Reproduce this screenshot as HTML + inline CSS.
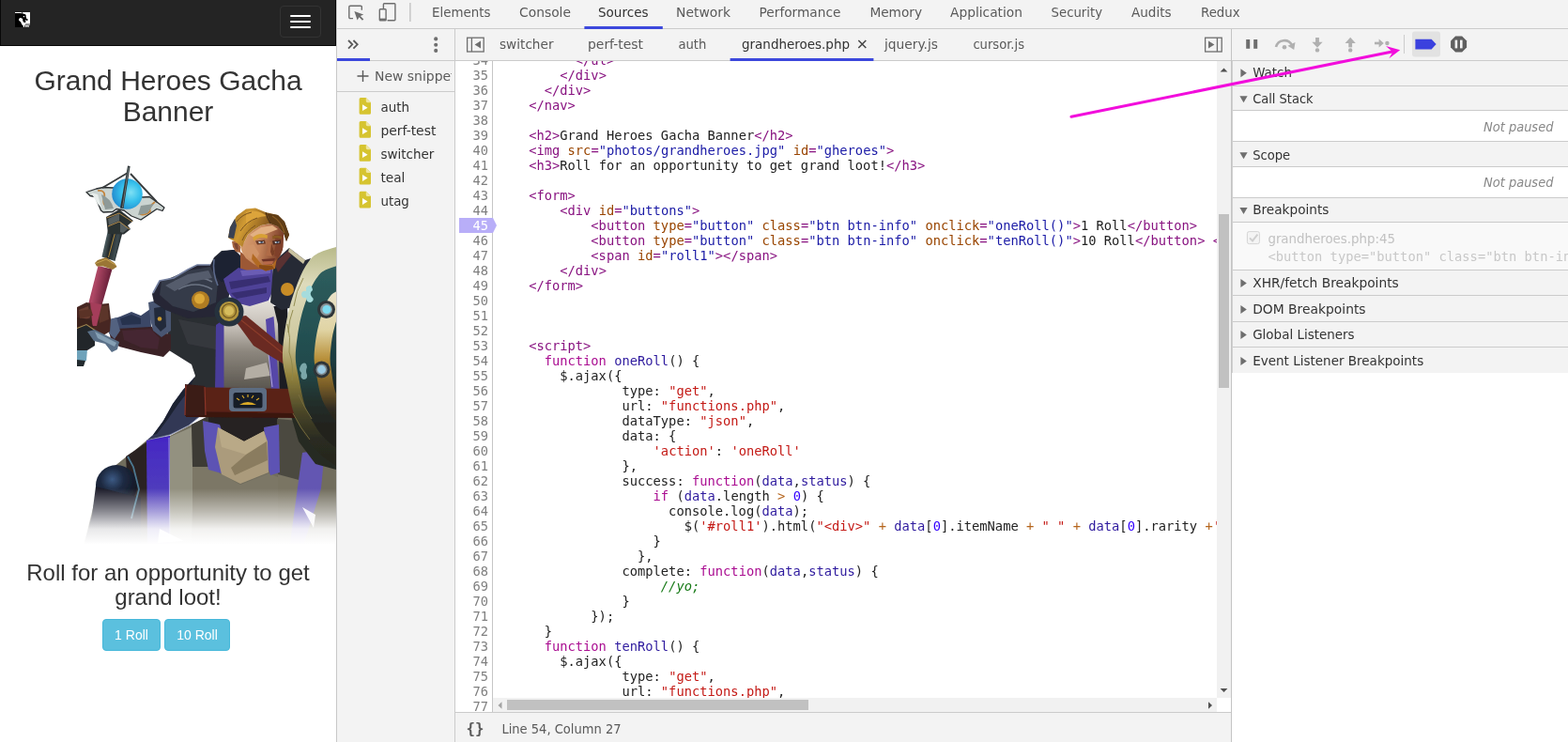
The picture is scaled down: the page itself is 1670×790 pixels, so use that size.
<!DOCTYPE html>
<html lang="en">
<head>
<meta charset="utf-8">
<title>Grand Heroes Gacha Banner - DevTools Sources</title>
<style>
html,body{margin:0;padding:0}
body{width:1670px;height:790px;position:relative;overflow:hidden;background:#fff}
#page,#code,#gut{will-change:transform}
#page{position:absolute;left:0;top:0;width:358px;height:790px;overflow:hidden;background:#fff;font-family:"Liberation Sans",Arial,sans-serif;color:#333}
#nav{position:absolute;left:0;top:0;width:356px;height:47.5px;background:#242424;border:1px solid #080808;border-top:0}
#tog{position:absolute;left:297px;top:6px;width:42px;height:32px;border:1px solid #333;border-radius:4px}
#tog i{position:absolute;left:10px;width:22px;height:2px;background:#fff;border-radius:1px}
#page h2{position:absolute;left:0;top:69px;width:358px;margin:0;font-size:30px;line-height:33px;font-weight:normal;text-align:center}
#page h3{position:absolute;left:0;top:597px;width:358px;margin:0;font-size:24px;line-height:26.4px;font-weight:normal;text-align:center}
.btn{position:absolute;top:659px;height:32px;border:1px solid #46b8da;background:#5bc0de;color:#fff;border-radius:4px;font-size:14px;line-height:32px;text-align:center}
#fig{position:absolute;left:0;top:160px;width:358px;height:430px}
#code{position:absolute;left:525px;top:65px;width:771px;height:678px;overflow:hidden;background:#fff;font-family:'DejaVu Sans Mono','Liberation Mono',monospace;font-size:13.75px;color:#222}
#code .ln{position:absolute;left:5px;height:16px;line-height:16px;white-space:pre;margin-top:-65px}
#gut{position:absolute;left:485px;top:65px;width:39px;height:693px;overflow:hidden;background:#fff;border-right:1px solid #c6c6c6;font-family:'DejaVu Sans Mono','Liberation Mono',monospace;font-size:13.75px;color:#808080}
#gut .gn{position:absolute;right:4px;height:16px;line-height:16px;margin-top:-65px}
#gut .bp{position:absolute;left:4px;width:36px;height:16px;background:#b8aef8;margin-top:-65px}
.t{color:#881280}.an{color:#994500}.av{color:#1a1aa6}.k{color:#aa0d91}.s{color:#c41a16}.d{color:#2e1a9e}.n{color:#3200ff}.o{color:#b5651d}.c{color:#177a17;font-style:italic}
</style>
</head>
<body>
<div id="page">
  <div id="nav">
    <svg style="position:absolute;left:15px;top:13px" width="16" height="16" viewBox="0 0 16 16"><rect width="16" height="16" fill="#fff"/><path d="M0 1 L5.500 1 L6 .8 L7.200 1.800 L7.300 0 L8 0 L8.200 1.500 L10.500 2 L12 3.200 L11.200 4 L12 5 L11.800 6.500 L13.500 7.200 L13.600 8.800 L12.200 9 L11.500 8 L11 9 L11.600 10.200 L11 11 L9.200 10.800 L8.600 9.800 L8.200 8.800 L8.200 7.200 L7 6.200 L5.200 6 L4.300 7 L4 8.400 L5 9.400 L6 10.200 L6.600 11.400 L7 12.400 L7.600 13.400 L8.600 14.200 L9 16 L0 16 Z" fill="#000"/><rect x="8.800" y="4" width="1.300" height="1.200" fill="#fff"/><path d="M11 12.600 H16 V13.500 H10.600 Z M10 14.200 h1.200 v1.800 h-1.200z M12.400 14.400 h1 v1.600 h-1z M14.600 14 h1.400 v2 h-1.400z" fill="#222"/></svg>
    <div id="tog"><i style="top:9px"></i><i style="top:15px"></i><i style="top:21px"></i></div>
  </div>
  <h2>Grand Heroes Gacha Banner</h2>
  <div id="fig"><svg width="358" height="430" viewBox="0 160 358 430" style="display:block">
<defs>
<clipPath id="imgclip"><rect x="82" y="160" width="276" height="430"/></clipPath>
<filter id="b1" x="-5%" y="-5%" width="110%" height="110%"><feGaussianBlur stdDeviation="0.7"/></filter>
<filter id="b2" x="-10%" y="-10%" width="120%" height="120%"><feGaussianBlur stdDeviation="2"/></filter>
<radialGradient id="orb" cx="0.62" cy="0.45" r="0.7"><stop offset="0" stop-color="#7fe0f4"/><stop offset="0.45" stop-color="#35c0ec"/><stop offset="1" stop-color="#1f7fc8"/></radialGradient>
<linearGradient id="fade" x1="0" y1="0" x2="0" y2="1"><stop offset="0" stop-color="#fff" stop-opacity="0"/><stop offset="0.42" stop-color="#fff" stop-opacity="0.5"/><stop offset="0.72" stop-color="#fff" stop-opacity="0.9"/><stop offset="1" stop-color="#fff" stop-opacity="1"/></linearGradient>
<linearGradient id="grip" x1="0" y1="0" x2="1" y2="0.35"><stop offset="0" stop-color="#7a2240"/><stop offset="0.4" stop-color="#b04866"/><stop offset="1" stop-color="#5a1830"/></linearGradient>
<linearGradient id="shaft" x1="0" y1="0" x2="1" y2="0.3"><stop offset="0" stop-color="#1a1e20"/><stop offset="0.3" stop-color="#46565a"/><stop offset="0.5" stop-color="#22282a"/><stop offset="0.78" stop-color="#3e4c50"/><stop offset="1" stop-color="#121618"/></linearGradient>
<linearGradient id="skin" x1="0" y1="0" x2="1" y2="0.2"><stop offset="0" stop-color="#d9a273"/><stop offset="0.55" stop-color="#c4835a"/><stop offset="1" stop-color="#7a3e28"/></linearGradient>
<linearGradient id="hair" x1="0" y1="0" x2="1" y2="0.3"><stop offset="0" stop-color="#8e6524"/><stop offset="0.35" stop-color="#d09a32"/><stop offset="0.7" stop-color="#8a5c20"/><stop offset="1" stop-color="#4a2e14"/></linearGradient>
<linearGradient id="tab" x1="0" y1="0" x2="0" y2="1"><stop offset="0" stop-color="#e4e0da"/><stop offset="0.3" stop-color="#c2bcb4"/><stop offset="0.55" stop-color="#8d877e"/><stop offset="1" stop-color="#55514a"/></linearGradient>
<linearGradient id="low" x1="0" y1="0" x2="1" y2="0"><stop offset="0" stop-color="#9c9886"/><stop offset="0.5" stop-color="#6c6858"/><stop offset="1" stop-color="#5a564a"/></linearGradient>
<linearGradient id="rim" x1="0" y1="0" x2="0" y2="1"><stop offset="0" stop-color="#b4b684"/><stop offset="0.18" stop-color="#dedbbc"/><stop offset="0.42" stop-color="#cfc9a0"/><stop offset="0.58" stop-color="#94843e"/><stop offset="0.74" stop-color="#4a4628"/><stop offset="0.86" stop-color="#2a2b20"/><stop offset="1" stop-color="#24251e"/></linearGradient>
<linearGradient id="teal" x1="0" y1="0" x2="0" y2="1"><stop offset="0" stop-color="#2f5e5e"/><stop offset="0.55" stop-color="#1f4a4c"/><stop offset="0.72" stop-color="#22302c"/><stop offset="0.85" stop-color="#20231e"/><stop offset="1" stop-color="#20221e"/></linearGradient>
<linearGradient id="teal2" x1="0" y1="0" x2="0" y2="1"><stop offset="0" stop-color="#284e50"/><stop offset="0.5" stop-color="#1c3c40"/><stop offset="0.8" stop-color="#1c221e"/><stop offset="1" stop-color="#1c1e1a"/></linearGradient>
<linearGradient id="inner" x1="0" y1="0" x2="0" y2="1"><stop offset="0" stop-color="#eae4cf"/><stop offset="0.3" stop-color="#e0d4a4"/><stop offset="0.5" stop-color="#b8903a"/><stop offset="0.68" stop-color="#7a5e28"/><stop offset="0.85" stop-color="#2e2a20"/><stop offset="1" stop-color="#22221c"/></linearGradient>
<radialGradient id="knee" cx="0.4" cy="0.35" r="0.7"><stop offset="0" stop-color="#3c5a84"/><stop offset="0.4" stop-color="#1e2a42"/><stop offset="1" stop-color="#10141e"/></radialGradient>
<linearGradient id="pstripe" x1="0" y1="0" x2="0" y2="1"><stop offset="0" stop-color="#4426c4"/><stop offset="1" stop-color="#5c54b4"/></linearGradient>
</defs>
<g clip-path="url(#imgclip)">
<g filter="url(#b1)">
<!-- cape behind (left) -->
<path d="M207 402 L195 415 L184 430 L174 448 L163 463 L156 469 L181 463 L201 453 L212 444 L216 412 Z" fill="#333955"/>
<path d="M207 402 L195 415 L184 430 L174 448 L163 463 L167 462 L179 446 L190 430 L201 416 L211 405 Z" fill="#1d2132"/>
<path d="M156 469 L181 463 L201 453 L212 444" stroke="#8a94b4" stroke-width="0.900" fill="none"/>
<!-- lower body mass -->
<path d="M156 469 L181 464 L204 452 L222 443 L310 440 L358 470 L358 585 L88 585 L98 545 L104 520 L120 498 L136 485 L143 480 Z" fill="#716d5d"/>
<path d="M181 465 L204 455 L206 500 L204 585 L181 585 Z" fill="#939180"/>
<path d="M204 452 L222 443 L224 470 L222 497 L205 497 Z" fill="#3c3a34"/>
<path d="M222 443 L296 443 L296 458 L280 460 L260 470 L234 456 L222 458 Z" fill="#262420"/>
<path d="M295 446 L318 448 L334 486 L320 516 L296 510 Z" fill="#4c4a40"/>
<path d="M296 505 L322 512 L316 585 L296 585 Z" fill="#7a7564"/>
<path d="M222 497 L236 505 L256 516 L286 504 L296 508 L296 585 L205 585 L205 497 Z" fill="#7b7766"/>
<!-- dark brown piece + knee -->
<path d="M134 486 L143 480 L157 470 L158 585 L140 585 Z" fill="#2a2022"/>
<circle cx="124" cy="517" r="22" fill="url(#knee)"/>
<path d="M102 518 L98 548 L90 578 L150 578 L150 530 Z" fill="#1a1e2a"/>
<path d="M136 486 L142 497 L148 521 L143 540 L140 552" fill="none" stroke="#4c7890" stroke-width="1.800"/>
<!-- purple vertical stripe -->
<path d="M156 469 L181 464 L181 585 L157 585 Z" fill="url(#pstripe)"/>
<path d="M180 466 L181 585" stroke="#b8b4e0" stroke-width="0.800" fill="none"/>
<!-- centre flap -->
<path d="M216 448 L234 452 L240 470 L236 504 L222 500 L218 480 Z" fill="#5d53b4"/>
<path d="M281 455 L297 452 L298 503 L288 506 L283 490 Z" fill="#5d53b4"/>
<path d="M232 455 L260 470 L281 459 L285 470 L286 503 L256 515 L236 505 L229 476 Z" fill="#ab9b7c"/>
<path d="M232 455 L260 470 L281 459 L284 470 L262 484 L236 476 Z" fill="#b9a987"/>
<path d="M262 484 L284 470 L285 490 L250 506 L246 498 Z" fill="#8a7c5e"/>
<!-- right low purple -->
<path d="M322 482 L346 478 L342 520 L322 585 L308 585 Z" fill="#6457b2"/>
<!-- shield bottom dark -->
<path d="M308 436 L358 430 L358 500 L336 494 L318 470 Z" fill="#282a22"/>
<!-- torso: chainmail -->
<path d="M176 326 L240 326 L232 373 L232 418 L200 418 L208 400 L204 388 L180 373 Z" fill="#2b2d32"/>
<path d="M190 340 L232 348 L230 372 L200 366 Z" fill="#36383e"/>
<path d="M288 326 L306 326 L310 418 L294 418 Z" fill="#1c1e24"/>
<!-- tabard -->
<path d="M234 342 L262 322 L290 320 L296 345 L298 418 L229 418 L232 373 Z" fill="url(#tab)"/>
<path d="M262 392 L284 386 L288 400 L260 404 Z" fill="#b4aea4"/>
<path d="M230 346 L238.500 340 L238.500 418 L229 418 Z" fill="#4a3c9a"/>
<path d="M283 340 L291.500 337 L297.500 416 L289 417 Z" fill="#5646a8"/>
<path d="M286 377 L290 412" stroke="#c8c2e8" stroke-width="0.8"/>
<!-- strap -->
<path d="M248 338 L262 336 L308 374 L306 390 L270 368 Z" fill="#6b2a20"/>
<path d="M252 337 L306 380" stroke="#8a3c2c" stroke-width="1.2" fill="none"/>
<!-- belt -->
<path d="M198 412 L312 414 L316 444 L198 442 Z" fill="#5a2418"/>
<path d="M198 438 L316 440 L316 445 L198 444 Z" fill="#3a150f"/>
<path d="M197 409 L218 411 L219 442 L197 443 Z" fill="#3a1a18"/>
<path d="M198 410 L197 442 M218 412 L219 442" stroke="#8a3428" stroke-width="1.2" fill="none"/>
<rect x="244" y="413" width="40" height="25" rx="4" fill="#5c6c82"/>
<rect x="248.500" y="418" width="31" height="16.500" rx="2.500" fill="#181b26"/>
<path d="M255 431 Q264 425 273 431 Z" fill="#d8a828"/>
<path d="M252 424 l3 2 M258 421 l2 3 M264 420 l0 3 M270 421 l-2 3 M276 424 l-3 2" stroke="#d8a828" stroke-width="1.2"/>
<!-- arm sleeve -->
<path d="M116 352 L123 346 L160 346 L166 353 L182 356 L182 372 L174 380 L150 375 L127 369 L118 361 Z" fill="#3a2026"/>
<path d="M130 352 L160 350 L170 360 L168 372 L150 370 L132 362 Z" fill="#442830"/>
<path d="M116 341 L128 337 L140 332 L150 336 L160 329 L161 348 L124 350 L116 353 Z" fill="#3a4666"/>
<path d="M128 339 L140 335 L150 339 L150 345 L130 346 Z" fill="#26304e"/>
<path d="M116 340 L124 338 L128 352 L122 361 L116 355 Z" fill="#526280"/>
<path d="M158 322 L170 319 L182 328 L182 352 L172 359 L163 352 L160 340 Z" fill="#485672"/>
<path d="M164 328 L176 326 L177 348 L171 353 L165 346 Z" fill="#242a3a"/>
<circle cx="170" cy="339.500" r="2.300" fill="#c89a30"/>
<!-- staff lower (below hand) -->
<path d="M82 371 L93 372 L92 384 L82 385 Z" fill="#6ea2ba"/>
<path d="M82 383 L91 384 L89 390 L82 390 Z" fill="#222a2e"/>
<!-- staff -->
<path d="M104.500 283 L119.500 286.500 L107 330 L93 328 Z" fill="url(#grip)"/>
<path d="M115.500 243 L131 245.500 L122.500 278 L108.500 273.500 Z" fill="url(#shaft)"/>
<path d="M123 246 L115.500 274" stroke="#b08a3c" stroke-width="1"/>
<path d="M101 280 L104 277 L113 274 L122 280 L124.500 284 L120 287 L110 283.500 L103 283.500 Z" fill="#9a7634"/>
<path d="M102 280.500 L113 276 L123 282" stroke="#c8a452" stroke-width="1" fill="none"/>
<!-- collar of staff head -->
<path d="M113 231 L127 223 L142 235 L136 240 L139 244 L132 249.500 L115 249 L114 240 Z" fill="#2c3032"/>
<path d="M115 233 L127 227.500 L127 235 L116 240 Z M128 236 L137 243 L131 248 L128 247 Z" fill="#565e60"/>
<path d="M113.500 232 L127 227 L141 236 M115 241 L127 236 L138 244" stroke="#b08a48" stroke-width="1" fill="none"/>
<!-- plate -->
<path d="M92 204.500 L102.500 201 L110 199.500 L121 200 L136 207 L152 210 L159 209.500 L167 215 L175 221 L173 224.500 L167 222.500 L156 230 L150 234 L140 230 L132 224 L124 222.500 L120 225.500 L110 226 L107.500 224 L101.500 209.500 L96 208.500 Z" fill="#cbd4d1" stroke="#2a2e30" stroke-width="1.300" stroke-linejoin="round"/>
<path d="M104 203 Q113 202 111 211 Q108 219 117 221 M165 215 Q158 220 160 225 Q154 230 149 228" stroke="#c4843a" stroke-width="1.700" fill="none"/>
<path d="M108 207 Q118 211 121 222 L112 223 Z" fill="#8e9a98"/>
<path d="M150 219 L164 217 L157 227 L147 229 Z" fill="#8e9a98"/>
<path d="M97 205 L104 207 L108 221 L104 217 Z" fill="#e8eeec"/>
<!-- frame lines -->
<path d="M109 200 L136 184 M139 185 L167 215" stroke="#383c3e" stroke-width="1.900" fill="none"/>
<!-- orb -->
<circle cx="135.500" cy="206.500" r="16.300" fill="url(#orb)"/>
<!-- spike -->
<path d="M136 176.500 L138.600 177 L131.500 222 L128 221.500 Z" fill="#2c3234"/>
<path d="M137 178 L130.500 221" stroke="#8a9698" stroke-width="0.700"/>
<!-- fist -->
<path d="M82 327 L92 322 L104 324 L116 323 L118 340 L117 353 L110 357 L100 352 L82 353 Z" fill="#472822"/>
<path d="M84 330 L94 326 L96 338 L86 343 Z" fill="#6a3e30"/>
<path d="M104 326 L115 325 L116 340 L106 344 Z" fill="#5c3429"/>
<path d="M96 322 L108.500 324 L103 347 L98.500 347 Z" fill="#a43c5a"/>
<path d="M82 338 L96 340 L100 350 L82 352 Z" fill="#3a201c"/>
<path d="M84 331 L97 329 L99 336 L85 339 Z" fill="#5a3228"/>
<path d="M82 350 L92 346 L101 352 L101 368 L93 373 L82 373 Z" fill="#22262a"/>
<path d="M82 349.500 L92 345.500 L101 351.500" stroke="#a08850" stroke-width="1.100" fill="none"/>
<path d="M93 353 L101 351 L127 364 L125 372 L119 375 L112 366 L100 363 Z" fill="#5a7088"/>
<path d="M101 353 L124 365 L122 369 L104 360 Z" fill="#86a0b4"/>
<!-- pauldron left -->
<path d="M162 313 L170 299 L185 296 L200 287 L210 282 L224 282 L228 274 L236 267 L250 266 L256 272 L256 290 L246 302 L242 326 L230 337 L200 339 L176 330 L164 322 Z" fill="#252834"/>
<path d="M172 300 L200 288 L224 284 L232 300 L230 322 L206 332 L184 326 L170 314 Z" fill="#353a48"/>
<path d="M186 300 Q206 290 226 300 M190 308 Q208 298 226 308" stroke="#6c7484" stroke-width="1.600" fill="none"/>
<path d="M226 279 L236 268 L248 266 L255 272 L256 288 L250 298 L236 300 L228 292 Z" fill="#1a2032"/>
<path d="M228 276 Q226 290 232 304" stroke="#5c6a8c" stroke-width="1.600" fill="none"/>
<path d="M163 312 L170 299 L185 296 L200 287 L210 282 L224 282" stroke="#7480a0" stroke-width="1.600" fill="none"/>
<path d="M176 304 L200 292 L222 288 L226 296 L204 300 L186 310 Z" fill="#555c6c"/>
<circle cx="213.500" cy="319.500" r="9.500" fill="#b07c24"/>
<circle cx="212.500" cy="318" r="5.500" fill="#dca838"/>
<!-- neck -->
<path d="M256 268 L272 280 L284 288 L276 296 L256 292 Z" fill="#9c5836"/>
<!-- scarf -->
<path d="M238 297 L254 285 L270 290 L290 284 L292 306 L286 320 L266 326 L250 322 L242 310 Z" fill="#4f4398"/>
<path d="M244 300 L286 294 L288 300 L246 308 Z M246 312 L284 306 L284 312 L252 318 Z" fill="#372d72"/>
<path d="M256 288 L288 286 L288 291 L258 294 Z" fill="#6a5cb4"/>
<!-- emblem -->
<circle cx="244" cy="332" r="15.500" fill="#27323e"/>
<circle cx="244" cy="331.500" r="10.500" fill="#b3963e"/>
<circle cx="244" cy="331" r="5" fill="#d6bc5c"/>
<circle cx="244" cy="331" r="7.500" fill="none" stroke="#6a5420" stroke-width="1.200"/>
<!-- pauldron right -->
<path d="M290 296 L291 279 L308 264 L325 277 L331 275 L325 288 L318 300 L316 326 L300 330 L288 322 Z" fill="#272a36"/>
<path d="M292 280 L307 267 L310 272 L296 290 Z" fill="#5a3030"/>
<path d="M308 264 L325 277 L323 281 L307 268 Z" fill="#c9c2a0"/>
<circle cx="306" cy="308" r="7" fill="#c88c26"/>
<!-- face -->
<path d="M260 258 L264 250 L270 245 L278 240 L288 238 L296 241 L302 248 L301.500 263 L299 271 L294 279 L287 284 L278 285 L270 281 L262 275 L258 269 L256 263 Z" fill="url(#skin)"/>
<path d="M266 250 L278 242 L290 240 L296 244 L286 248 L272 254 Z" fill="#e2b083"/>
<path d="M247 257 L252 256 L256 262 L256 269 L251 268 L248 263 Z" fill="#a4633f"/>
<path d="M249 259 L253 259 L254 266 L251 265 Z" fill="#7c4630"/>
<path d="M292 250 L302 250 L301 266 L297 275 L291 271 L294 260 Z" fill="#7f4029"/>
<path d="M262 262 L270 260 L276 270 L272 278 L264 274 Z" fill="#d09468"/>
<path d="M269 253 Q276 246.500 285 250.500 L284.500 254 Q276 251 270.500 256.500 Z" fill="#d7a036"/>
<path d="M290 251.500 Q295 249.500 300 252 L299.500 254.500 Q295 252.500 290.500 254.500 Z" fill="#8a5a22"/>
<path d="M272 256.500 L282 255.500 L283 259.500 L274 260.500 Z" fill="#6a3a28"/>
<path d="M290 256.500 L299 255.500 L299 259.500 L291 260.500 Z" fill="#4e2a20"/>
<path d="M275 257.200 l6 -0.300 l-0.600 1.800 l-4.600 0.200z M292.500 257.200 l5 -0.300 l-0.300 1.800 l-4.200 0.200z" fill="#c9d3dc"/>
<path d="M277.500 257 l2.200 0 l0 1.800 l-2.200 0z M294.500 257 l2 0 l0 1.800 l-2 0z" fill="#2c3a52"/>
<path d="M284 256 L289 258 L293 270 L290 273 L283 272 L285 266 Z" fill="#b06c46"/>
<path d="M289 259 L293 270 L290 273 L288 268 Z" fill="#7a3f28"/>
<path d="M278.500 276 L293 275 L292 277.500 L280 278.500 Z" fill="#6e3226"/>
<path d="M280 279 L291 278 L290 281 L282 281.500 Z" fill="#b8684a"/>
<path d="M269 270 L275 277 L279 282 L290 282 L294.500 276 L293 286 L283 288.500 L274 284 L268 276 Z" fill="#b26a24"/>
<path d="M276 282 L290 283 L292 286 L283 288.500 L276 285 Z" fill="#8a4c18"/>
<!-- hair -->
<path d="M243 253 L245 242 L252 230 L262 222.500 L272 221.500 L283 226 L296 229 L303 236 L308 250 L305 257 L302 248 L296 241 L288 238 L278 240 L270 245 L264 250 L260 258 L258 263 L250 257 L246 255 Z" fill="url(#hair)"/>
<path d="M243 253 L245 242 L250 233 L252 240 L249 254 Z" fill="#3a4252"/>
<path d="M262 226 Q274 222 284 230 Q272 230 262 240 Z" fill="#dca43a"/>
<path d="M284 227 L296 229 L303 236 L308 250 L305 257 L302 248 L296 241 L288 238 Z" fill="#5e3c18"/>
<path d="M290 230 Q300 236 303 248" stroke="#8a5c22" stroke-width="1.400" fill="none"/>
<path d="M252 236 Q258 228 268 226 M256 246 Q262 236 274 232 M258 256 Q262 246 272 240" stroke="#7a5420" stroke-width="1" fill="none"/>
<path d="M283 226 Q284 232 288 238" stroke="#4a2e12" stroke-width="1.200" fill="none"/>
<!-- shield -->
<path d="M372.0 259.0 C369.7 259.7 363.3 261.3 358.0 263.0 C352.7 264.7 344.7 266.7 340.0 269.0 C335.3 271.3 333.3 272.8 330.0 277.0 C326.7 281.2 323.5 286.0 320.0 294.0 C316.5 302.0 311.8 314.8 309.0 325.0 C306.2 335.2 304.3 345.7 303.0 355.0 C301.7 364.3 300.7 372.7 301.0 381.0 C301.3 389.3 303.0 395.2 305.0 405.0 C307.0 414.8 309.8 430.5 313.0 440.0 C316.2 449.5 319.8 455.2 324.0 462.0 C328.2 468.8 332.3 475.3 338.0 481.0 C343.7 486.7 352.3 492.7 358.0 496.0 C363.7 499.3 369.7 500.2 372.0 501.0 L460 501.0 L460 259.0 Z" fill="url(#rim)"/>
<path d="M373.4 278.8 C371.5 279.3 366.2 280.7 361.9 282.1 C357.5 283.5 350.9 285.2 347.0 287.2 C343.1 289.2 341.5 290.4 338.8 294.0 C336.0 297.5 333.4 301.6 330.5 308.3 C327.6 315.1 323.8 325.9 321.4 334.5 C319.1 343.1 317.6 352.0 316.5 359.9 C315.4 367.8 314.6 374.8 314.8 381.8 C315.1 388.9 316.5 393.8 318.1 402.1 C319.8 410.4 322.1 423.7 324.7 431.7 C327.3 439.7 330.4 444.5 333.8 450.3 C337.2 456.1 340.7 461.6 345.4 466.3 C350.0 471.1 357.2 476.2 361.9 479.0 C366.5 481.8 371.5 482.5 373.4 483.2 L460 483.2 L460 278.8 Z" fill="url(#teal)"/>
<path d="M375.4 304.6 C374.1 305.0 370.4 306.1 367.4 307.1 C364.3 308.2 359.7 309.5 357.0 311.0 C354.3 312.5 353.2 313.4 351.2 316.1 C349.3 318.7 347.5 321.8 345.5 327.0 C343.5 332.1 340.8 340.3 339.2 346.8 C337.5 353.3 336.5 360.0 335.7 366.0 C335.0 372.0 334.4 377.3 334.6 382.6 C334.8 388.0 335.7 391.7 336.9 398.0 C338.0 404.3 339.7 414.3 341.5 420.4 C343.3 426.5 345.4 430.1 347.8 434.5 C350.2 438.9 352.6 443.0 355.9 446.6 C359.1 450.3 364.1 454.1 367.4 456.2 C370.6 458.4 374.1 458.9 375.4 459.4 L460 459.4 L460 304.6 Z" fill="url(#inner)"/>
<path d="M377.1 323.7 C376.3 324.0 374.0 324.9 372.1 325.7 C370.2 326.5 367.3 327.5 365.6 328.6 C363.9 329.8 363.2 330.5 362.0 332.5 C360.8 334.6 359.7 336.9 358.4 340.9 C357.1 344.8 355.5 351.1 354.4 356.1 C353.4 361.0 352.8 366.2 352.3 370.8 C351.8 375.3 351.4 379.4 351.6 383.5 C351.7 387.6 352.3 390.4 353.0 395.2 C353.7 400.1 354.7 407.7 355.9 412.4 C357.0 417.1 358.3 419.8 359.8 423.2 C361.3 426.5 362.8 429.7 364.9 432.5 C366.9 435.3 370.0 438.2 372.1 439.8 C374.1 441.5 376.3 441.9 377.1 442.3 L460 442.3 L460 323.7 Z" fill="url(#teal2)"/>
<path d="M306 345 q4 14 2 30 q5 14 3 30 M323 296 q-8 14 -10 30 M312 330 q-4 10 -5 24" stroke="#8c8648" stroke-width="0.900" fill="none"/>
<path d="M318 420 q6 14 14 26 M312 440 q8 16 18 28" stroke="#7a7040" stroke-width="0.900" fill="none"/>
<circle cx="347.500" cy="329.500" r="9.500" fill="#2e3438"/>
<circle cx="347.500" cy="329.500" r="6.500" fill="#8a9498"/>
<circle cx="348" cy="329.500" r="4.600" fill="#7fdcf0"/>
<circle cx="342.500" cy="393.500" r="9" fill="#2e3438"/>
<circle cx="342.500" cy="393.500" r="6" fill="#7e888c"/>
<circle cx="342.500" cy="393.500" r="4.400" fill="#9ccce4"/>
<path d="M326 306 q6 -5 7 3 q-4 3 -1 7 q4 3 -1 6 q-5 0 -5 -5 q-5 1 -5 -4 q1 -4 5 -3 Z" fill="#a6dcdc"/>
<path d="M321 388 q5 -4 6 3 q-2 4 0 8 q1 5 -4 5 q-4 -2 -2 -7 q-4 -3 0 -9 Z" fill="#7aa6a8"/>
</g>
<!-- fade at bottom -->
<rect x="82" y="520" width="276" height="60" fill="url(#fade)"/>
<rect x="82" y="579.5" width="276" height="12" fill="#fff"/>
<path d="M322 540 L336 548 L334 562 Z M170 563 L196 576 L168 578 Z" fill="#fff" opacity="0.9"/>
</g>
</svg>
</div>
  <h3>Roll for an opportunity to get grand loot!</h3>
  <div class="btn" style="left:109px;width:60px">1 Roll</div>
  <div class="btn" style="left:175px;width:68px">10 Roll</div>
</div>
<svg width="1670" height="790" viewBox="0 0 1670 790" style="position:absolute;left:0;top:0" font-family="'DejaVu Sans','Liberation Sans',sans-serif">
<rect x="359" y="0" width="1311" height="30" fill="#f3f3f3"/>
<rect x="359" y="30" width="1311" height="1" fill="#cbcbcb"/>
<rect x="359" y="31" width="1311" height="33" fill="#f3f3f3"/>
<rect x="359" y="64" width="1311" height="1" fill="#cbcbcb"/>
<rect x="358" y="0" width="1" height="790" fill="#c8c8c8"/>
<rect x="359" y="65" width="125" height="725" fill="#f3f3f3"/>
<rect x="484" y="31" width="1" height="759" fill="#cbcbcb"/>
<rect x="359" y="97" width="125" height="1" fill="#cbcbcb"/>
<rect x="359" y="62" width="35" height="3" fill="#3c48dc"/>
<rect x="485" y="759" width="826" height="31" fill="#f3f3f3"/>
<rect x="485" y="758" width="826" height="1" fill="#cbcbcb"/>
<rect x="1311" y="31" width="1" height="759" fill="#c4c4c4"/>
<rect x="1296" y="65" width="15" height="678" fill="#f1f1f1"/>
<rect x="1298" y="228" width="11" height="185" fill="#c1c1c1"/>
<path d="M1299.6 76.5 L1303.5 72.5 L1307.4 76.5 Z" fill="#505050"/>
<path d="M1299.6 733 L1303.5 737 L1307.4 733 Z" fill="#505050"/>
<rect x="525" y="743" width="771" height="15" fill="#f1f1f1"/>
<rect x="540" y="745" width="321" height="11" fill="#c1c1c1"/>
<path d="M534.5 747.2 L530.5 751 L534.5 754.8 Z" fill="#a3a3a3"/>
<path d="M1287 747.2 L1291 751 L1287 754.8 Z" fill="#505050"/>
<text x="460.0" y="18.0" font-size="13.50" fill="#5a5a5a" textLength="62.4" lengthAdjust="spacingAndGlyphs">Elements</text>
<text x="553.0" y="18.0" font-size="13.50" fill="#5a5a5a" textLength="55.0" lengthAdjust="spacingAndGlyphs">Console</text>
<text x="637.0" y="18.0" font-size="13.50" fill="#333" textLength="53.5" lengthAdjust="spacingAndGlyphs">Sources</text>
<text x="720.0" y="18.0" font-size="13.50" fill="#5a5a5a" textLength="58.0" lengthAdjust="spacingAndGlyphs">Network</text>
<text x="808.6" y="18.0" font-size="13.50" fill="#5a5a5a" textLength="86.8" lengthAdjust="spacingAndGlyphs">Performance</text>
<text x="926.4" y="18.0" font-size="13.50" fill="#5a5a5a" textLength="55.6" lengthAdjust="spacingAndGlyphs">Memory</text>
<text x="1012.0" y="18.0" font-size="13.50" fill="#5a5a5a" textLength="77.0" lengthAdjust="spacingAndGlyphs">Application</text>
<text x="1119.6" y="18.0" font-size="13.50" fill="#5a5a5a" textLength="54.4" lengthAdjust="spacingAndGlyphs">Security</text>
<text x="1205.0" y="18.0" font-size="13.50" fill="#5a5a5a" textLength="42.6" lengthAdjust="spacingAndGlyphs">Audits</text>
<text x="1279.0" y="18.0" font-size="13.50" fill="#5a5a5a" textLength="41.6" lengthAdjust="spacingAndGlyphs">Redux</text>
<rect x="622.4" y="28" width="83.4" height="3" fill="#3c48dc"/>
<rect x="436" y="3" width="1.6" height="20" fill="#c9c9c9"/>
<g fill="none" stroke="#6e6e6e" stroke-width="1.4"><path d="M376 19.6 H373 a1.2 1.2 0 0 1 -1.2 -1.2 V7.4 a1.2 1.2 0 0 1 1.2 -1.2 H384.1 a1.2 1.2 0 0 1 1.2 1.2 V10.8"/></g>
<path d="M377.4 12.1 L387.2 15.4 L383.8 17 L387.3 20.4 L385.9 21.7 L382.5 18.3 L380.6 21.6 Z" fill="#6e6e6e"/>
<g fill="none" stroke="#6e6e6e" stroke-width="1.4"><path d="M408.4 9 V4.5 a0.8 0.8 0 0 1 .8 -.8 H420.1 a0.8 0.8 0 0 1 .8 .8 V20.9 a0.8 .8 0 0 1 -.8 .8 H412.6"/><rect x="404.3" y="9.8" width="6.8" height="11.9" rx="0.8"/></g><rect x="404.3" y="19.6" width="6.8" height="2.1" fill="#6e6e6e"/>
<g fill="none" stroke="#5a5a5a" stroke-width="1.8"><path d="M371 43 L375.3 47.3 L371 51.6"/><path d="M376.4 43 L380.7 47.3 L376.4 51.6"/></g>
<circle cx="464.2" cy="41.4" r="2.05" fill="#6e6e6e"/>
<circle cx="464.2" cy="47.7" r="2.05" fill="#6e6e6e"/>
<circle cx="464.2" cy="53.9" r="2.05" fill="#6e6e6e"/>
<g stroke="#5a5a5a" stroke-width="1.4"><path d="M380.5 81 H392.5 M386.5 75 V87"/></g>
<svg x="359" y="65" width="122" height="32"><text x="40" y="20.6" font-size="13.5" fill="#5a5a5a" textLength="86.6" lengthAdjust="spacingAndGlyphs">New snippet</text></svg>
<path d="M383.2 104.0 h6.6 l5.2 5.2 v11 a1.6 1.6 0 0 1 -1.6 1.6 h-9.2 a1.6 1.6 0 0 1 -1.6 -1.6 v-14.6 a1.6 1.6 0 0 1 1.6 -1.6 z" fill="#d6c430"/>
<path d="M389.8 104.0 v3.6 a1.6 1.6 0 0 0 1.6 1.6 h3.6 z" fill="#efe6a0"/>
<path d="M386 111.3 l5.6 3.4 l-5.6 3.4 z" fill="#fff"/>
<text x="405.4" y="119.0" font-size="13.50" fill="#333" textLength="30.6" lengthAdjust="spacingAndGlyphs">auth</text>
<path d="M383.2 129.0 h6.6 l5.2 5.2 v11 a1.6 1.6 0 0 1 -1.6 1.6 h-9.2 a1.6 1.6 0 0 1 -1.6 -1.6 v-14.6 a1.6 1.6 0 0 1 1.6 -1.6 z" fill="#d6c430"/>
<path d="M389.8 129.0 v3.6 a1.6 1.6 0 0 0 1.6 1.6 h3.6 z" fill="#efe6a0"/>
<path d="M386 136.3 l5.6 3.4 l-5.6 3.4 z" fill="#fff"/>
<text x="405.4" y="144.0" font-size="13.50" fill="#333" textLength="59.0" lengthAdjust="spacingAndGlyphs">perf-test</text>
<path d="M383.2 154.0 h6.6 l5.2 5.2 v11 a1.6 1.6 0 0 1 -1.6 1.6 h-9.2 a1.6 1.6 0 0 1 -1.6 -1.6 v-14.6 a1.6 1.6 0 0 1 1.6 -1.6 z" fill="#d6c430"/>
<path d="M389.8 154.0 v3.6 a1.6 1.6 0 0 0 1.6 1.6 h3.6 z" fill="#efe6a0"/>
<path d="M386 161.3 l5.6 3.4 l-5.6 3.4 z" fill="#fff"/>
<text x="405.4" y="169.0" font-size="13.50" fill="#333" textLength="57.0" lengthAdjust="spacingAndGlyphs">switcher</text>
<path d="M383.2 178.8 h6.6 l5.2 5.2 v11 a1.6 1.6 0 0 1 -1.6 1.6 h-9.2 a1.6 1.6 0 0 1 -1.6 -1.6 v-14.6 a1.6 1.6 0 0 1 1.6 -1.6 z" fill="#d6c430"/>
<path d="M389.8 178.8 v3.6 a1.6 1.6 0 0 0 1.6 1.6 h3.6 z" fill="#efe6a0"/>
<path d="M386 186.1 l5.6 3.4 l-5.6 3.4 z" fill="#fff"/>
<text x="405.4" y="193.8" font-size="13.50" fill="#333" textLength="26.0" lengthAdjust="spacingAndGlyphs">teal</text>
<path d="M383.2 203.8 h6.6 l5.2 5.2 v11 a1.6 1.6 0 0 1 -1.6 1.6 h-9.2 a1.6 1.6 0 0 1 -1.6 -1.6 v-14.6 a1.6 1.6 0 0 1 1.6 -1.6 z" fill="#d6c430"/>
<path d="M389.8 203.8 v3.6 a1.6 1.6 0 0 0 1.6 1.6 h3.6 z" fill="#efe6a0"/>
<path d="M386 211.1 l5.6 3.4 l-5.6 3.4 z" fill="#fff"/>
<text x="405.4" y="218.8" font-size="13.50" fill="#333" textLength="30.5" lengthAdjust="spacingAndGlyphs">utag</text>
<g fill="none" stroke="#6e6e6e" stroke-width="1.3"><rect x="497.6" y="40.2" width="17.6" height="14.8"/><path d="M502.4 40.2 V55"/></g><path d="M512 43.6 L505.6 47.6 L512 51.6 Z" fill="#6e6e6e"/>
<text x="532.0" y="52.4" font-size="13.50" fill="#5a5a5a" textLength="57.5" lengthAdjust="spacingAndGlyphs">switcher</text>
<text x="626.0" y="52.4" font-size="13.50" fill="#5a5a5a" textLength="59.0" lengthAdjust="spacingAndGlyphs">perf-test</text>
<text x="722.4" y="52.4" font-size="13.50" fill="#5a5a5a" textLength="30.0" lengthAdjust="spacingAndGlyphs">auth</text>
<text x="790.0" y="52.4" font-size="13.50" fill="#333" textLength="115.0" lengthAdjust="spacingAndGlyphs">grandheroes.php</text>
<text x="942.0" y="52.4" font-size="13.50" fill="#5a5a5a" textLength="57.0" lengthAdjust="spacingAndGlyphs">jquery.js</text>
<text x="1036.4" y="52.4" font-size="13.50" fill="#5a5a5a" textLength="54.6" lengthAdjust="spacingAndGlyphs">cursor.js</text>
<rect x="777.6" y="62" width="152.8" height="3" fill="#3c48dc"/>
<g stroke="#444" stroke-width="1.5"><path d="M914.3 43 L922.3 51 M922.3 43 L914.3 51"/></g>
<g fill="none" stroke="#6e6e6e" stroke-width="1.3"><rect x="1283.6" y="40.2" width="17.6" height="14.8"/><path d="M1296.4 40.2 V55"/></g><path d="M1287 43.6 L1293.4 47.6 L1287 51.6 Z" fill="#6e6e6e"/>
<rect x="1327.2" y="42" width="4" height="9.8" fill="#6e6e6e"/><rect x="1335.2" y="42" width="4" height="9.8" fill="#6e6e6e"/>
<path d="M1359 50 A9.2 9.2 0 0 1 1376 48" fill="none" stroke="#b0b0b0" stroke-width="2.6"/><path d="M1379.5 45 L1378.2 53 L1371.5 48.8 Z" fill="#b0b0b0"/><circle cx="1368" cy="50.3" r="2.3" fill="#b0b0b0"/>
<rect x="1401.1" y="40" width="3.8" height="6" fill="#b0b0b0"/><path d="M1397.4 44.8 H1408.6 L1403 50.8 Z" fill="#b0b0b0"/><circle cx="1403" cy="53.4" r="2.2" fill="#b0b0b0"/>
<path d="M1432.6 46 H1443.8 L1438.2 39.8 Z" fill="#b0b0b0"/><rect x="1436.3" y="45" width="3.8" height="5.4" fill="#b0b0b0"/><circle cx="1438.2" cy="53.4" r="2.2" fill="#b0b0b0"/>
<rect x="1464" y="44.7" width="6" height="2.6" fill="#b0b0b0"/><path d="M1468.6 41.4 L1473.8 46 L1468.6 50.6 Z" fill="#b0b0b0"/><circle cx="1477.4" cy="46" r="2.2" fill="#b0b0b0"/>
<rect x="1495" y="37" width="1" height="20" fill="#ccc"/>
<rect x="1504" y="33.4" width="30" height="27" rx="3" fill="#e2e2e2"/>
<path d="M1507.4 41.8 H1524.6 L1529.6 47 L1524.6 52.4 H1507.4 Z" fill="#3b41de"/>
<polygon points="1562.1,50.5 1557.1,55.5 1550.1,55.5 1545.1,50.5 1545.1,43.5 1550.1,38.5 1557.1,38.5 1562.1,43.5" fill="#5f5f5f"/>
<rect x="1549.6" y="42.6" width="2.6" height="8.8" fill="#f3f3f3"/><rect x="1555" y="42.6" width="2.6" height="8.8" fill="#f3f3f3"/>
<rect x="1313" y="65" width="357" height="725" fill="#fff"/>
<rect x="1313" y="65" width="357" height="26" fill="#f3f3f3"/>
<rect x="1313" y="91" width="357" height="1" fill="#cbcbcb"/>
<path d="M1321.4 73.3 v9 l6.4 -4.5 z" fill="#6e6e6e"/>
<text x="1334.2" y="82.4" font-size="13.50" fill="#333" textLength="41.8" lengthAdjust="spacingAndGlyphs">Watch</text>
<rect x="1313" y="92" width="357" height="25" fill="#f3f3f3"/>
<rect x="1313" y="117" width="357" height="1" fill="#cbcbcb"/>
<path d="M1320.4 102.2 h8.2 l-4.1 7 z" fill="#6e6e6e"/>
<text x="1334.2" y="109.6" font-size="13.50" fill="#333" textLength="64.4" lengthAdjust="spacingAndGlyphs">Call Stack</text>
<rect x="1313" y="150" width="357" height="1" fill="#cbcbcb"/>
<rect x="1313" y="151" width="357" height="26" fill="#f3f3f3"/>
<rect x="1313" y="177" width="357" height="1" fill="#cbcbcb"/>
<path d="M1320.4 162.2 h8.2 l-4.1 7 z" fill="#6e6e6e"/>
<text x="1334.2" y="169.6" font-size="13.50" fill="#333" textLength="40.0" lengthAdjust="spacingAndGlyphs">Scope</text>
<rect x="1313" y="210" width="357" height="1" fill="#cbcbcb"/>
<rect x="1313" y="211" width="357" height="25" fill="#f3f3f3"/>
<rect x="1313" y="236" width="357" height="1" fill="#cbcbcb"/>
<path d="M1320.4 221.0 h8.2 l-4.1 7 z" fill="#6e6e6e"/>
<text x="1334.2" y="228.4" font-size="13.50" fill="#333" textLength="81.2" lengthAdjust="spacingAndGlyphs">Breakpoints</text>
<rect x="1313" y="237" width="357" height="50" fill="#f9f9f9"/>
<rect x="1313" y="287" width="357" height="1" fill="#cbcbcb"/>
<rect x="1313" y="288" width="357" height="26" fill="#f3f3f3"/>
<rect x="1313" y="314" width="357" height="1" fill="#cbcbcb"/>
<path d="M1321.4 296.9 v9 l6.4 -4.5 z" fill="#6e6e6e"/>
<text x="1334.2" y="306.0" font-size="13.50" fill="#333" textLength="155.6" lengthAdjust="spacingAndGlyphs">XHR/fetch Breakpoints</text>
<rect x="1313" y="315" width="357" height="27" fill="#f3f3f3"/>
<rect x="1313" y="342" width="357" height="1" fill="#cbcbcb"/>
<path d="M1321.4 324.9 v9 l6.4 -4.5 z" fill="#6e6e6e"/>
<text x="1334.2" y="334.0" font-size="13.50" fill="#333" textLength="120.4" lengthAdjust="spacingAndGlyphs">DOM Breakpoints</text>
<rect x="1313" y="343" width="357" height="26" fill="#f3f3f3"/>
<rect x="1313" y="369" width="357" height="1" fill="#cbcbcb"/>
<path d="M1321.4 351.9 v9 l6.4 -4.5 z" fill="#6e6e6e"/>
<text x="1334.2" y="361.0" font-size="13.50" fill="#333" textLength="108.4" lengthAdjust="spacingAndGlyphs">Global Listeners</text>
<rect x="1313" y="370" width="357" height="27" fill="#f3f3f3"/>
<path d="M1321.4 379.9 v9 l6.4 -4.5 z" fill="#6e6e6e"/>
<text x="1334.2" y="389.0" font-size="13.50" fill="#333" textLength="182.0" lengthAdjust="spacingAndGlyphs">Event Listener Breakpoints</text>
<rect x="1312" y="65" width="1" height="332" fill="#d0d0d0"/>
<text x="1580.0" y="140.0" font-size="13.50" fill="#888" textLength="74.4" lengthAdjust="spacingAndGlyphs" font-style="italic">Not paused</text>
<text x="1580.0" y="199.4" font-size="13.50" fill="#888" textLength="74.4" lengthAdjust="spacingAndGlyphs" font-style="italic">Not paused</text>
<rect x="1328.4" y="246.6" width="13" height="13" rx="2" fill="#f4f4f4" stroke="#d4d4d4" stroke-width="1"/>
<path d="M1331 253.4 L1334 256.4 L1339.4 249.6" fill="none" stroke="#cfcfcf" stroke-width="2"/>
<text x="1350.4" y="259.0" font-size="13.50" fill="#c2c2c2" textLength="135.6" lengthAdjust="spacingAndGlyphs">grandheroes.php:45</text>
<svg x="1313" y="262" width="357" height="24"><text x="37.4" y="16.4" font-size="13.75" fill="#c8c8c8" font-family="'DejaVu Sans Mono','Liberation Mono',monospace" xml:space="preserve">&lt;button type="button" class="btn btn-info" onclick="oneRoll()"&gt;</text></svg>
<text x="496.6" y="781.4" font-size="15.5" fill="#5a5a5a" font-weight="bold" font-family="'DejaVu Sans Mono','Liberation Mono',monospace" textLength="19" lengthAdjust="spacingAndGlyphs">{}</text>
<text x="534.4" y="781.0" font-size="13.50" fill="#5a5a5a" textLength="127.2" lengthAdjust="spacingAndGlyphs">Line 54, Column 27</text>
</svg>
<div id="gut">
<div class="gn" style="top:56px">34</div>
<div class="gn" style="top:72px">35</div>
<div class="gn" style="top:88px">36</div>
<div class="gn" style="top:104px">37</div>
<div class="gn" style="top:120px">38</div>
<div class="gn" style="top:136px">39</div>
<div class="gn" style="top:152px">40</div>
<div class="gn" style="top:168px">41</div>
<div class="gn" style="top:184px">42</div>
<div class="gn" style="top:200px">43</div>
<div class="gn" style="top:216px">44</div>
<div class="bp" style="top:232px"></div>
<div class="gn" style="top:232px;color:#fff">45</div>
<div class="gn" style="top:248px">46</div>
<div class="gn" style="top:264px">47</div>
<div class="gn" style="top:280px">48</div>
<div class="gn" style="top:296px">49</div>
<div class="gn" style="top:312px">50</div>
<div class="gn" style="top:328px">51</div>
<div class="gn" style="top:344px">52</div>
<div class="gn" style="top:360px">53</div>
<div class="gn" style="top:376px">54</div>
<div class="gn" style="top:392px">55</div>
<div class="gn" style="top:408px">56</div>
<div class="gn" style="top:424px">57</div>
<div class="gn" style="top:440px">58</div>
<div class="gn" style="top:456px">59</div>
<div class="gn" style="top:472px">60</div>
<div class="gn" style="top:488px">61</div>
<div class="gn" style="top:504px">62</div>
<div class="gn" style="top:520px">63</div>
<div class="gn" style="top:536px">64</div>
<div class="gn" style="top:552px">65</div>
<div class="gn" style="top:568px">66</div>
<div class="gn" style="top:584px">67</div>
<div class="gn" style="top:600px">68</div>
<div class="gn" style="top:616px">69</div>
<div class="gn" style="top:632px">70</div>
<div class="gn" style="top:648px">71</div>
<div class="gn" style="top:664px">72</div>
<div class="gn" style="top:680px">73</div>
<div class="gn" style="top:696px">74</div>
<div class="gn" style="top:712px">75</div>
<div class="gn" style="top:728px">76</div>
<div class="gn" style="top:744px">77</div>
</div>
<div id="code">
<div class="ln" style="top:56px">          <span class="t">&lt;/ul&gt;</span></div>
<div class="ln" style="top:72px">        <span class="t">&lt;/div&gt;</span></div>
<div class="ln" style="top:88px">      <span class="t">&lt;/div&gt;</span></div>
<div class="ln" style="top:104px">    <span class="t">&lt;/nav&gt;</span></div>
<div class="ln" style="top:120px"></div>
<div class="ln" style="top:136px">    <span class="t">&lt;h2&gt;</span>Grand Heroes Gacha Banner<span class="t">&lt;/h2&gt;</span></div>
<div class="ln" style="top:152px">    <span class="t">&lt;img</span> <span class="an">src</span><span class="t">=</span><span class="av">&quot;photos/grandheroes.jpg&quot;</span> <span class="an">id</span><span class="t">=</span><span class="av">&quot;gheroes&quot;</span><span class="t">&gt;</span></div>
<div class="ln" style="top:168px">    <span class="t">&lt;h3&gt;</span>Roll for an opportunity to get grand loot!<span class="t">&lt;/h3&gt;</span></div>
<div class="ln" style="top:184px"></div>
<div class="ln" style="top:200px">    <span class="t">&lt;form&gt;</span></div>
<div class="ln" style="top:216px">        <span class="t">&lt;div</span> <span class="an">id</span><span class="t">=</span><span class="av">&quot;buttons&quot;</span><span class="t">&gt;</span></div>
<div class="ln" style="top:232px">            <span class="t">&lt;button</span> <span class="an">type</span><span class="t">=</span><span class="av">&quot;button&quot;</span> <span class="an">class</span><span class="t">=</span><span class="av">&quot;btn btn-info&quot;</span> <span class="an">onclick</span><span class="t">=</span><span class="av">&quot;oneRoll()&quot;</span><span class="t">&gt;</span>1 Roll<span class="t">&lt;/button&gt;</span></div>
<div class="ln" style="top:248px">            <span class="t">&lt;button</span> <span class="an">type</span><span class="t">=</span><span class="av">&quot;button&quot;</span> <span class="an">class</span><span class="t">=</span><span class="av">&quot;btn btn-info&quot;</span> <span class="an">onclick</span><span class="t">=</span><span class="av">&quot;tenRoll()&quot;</span><span class="t">&gt;</span>10 Roll<span class="t">&lt;/button&gt;</span> <span class="t">&lt;br&gt;</span></div>
<div class="ln" style="top:264px">            <span class="t">&lt;span</span> <span class="an">id</span><span class="t">=</span><span class="av">&quot;roll1&quot;</span><span class="t">&gt;</span><span class="t">&lt;/span&gt;</span></div>
<div class="ln" style="top:280px">        <span class="t">&lt;/div&gt;</span></div>
<div class="ln" style="top:296px">    <span class="t">&lt;/form&gt;</span></div>
<div class="ln" style="top:312px"></div>
<div class="ln" style="top:328px"></div>
<div class="ln" style="top:344px"></div>
<div class="ln" style="top:360px">    <span class="t">&lt;script&gt;</span></div>
<div class="ln" style="top:376px">      <span class="k">function</span> <span class="d">oneRoll</span>() {</div>
<div class="ln" style="top:392px">        $.ajax({</div>
<div class="ln" style="top:408px">                type: <span class="s">&quot;get&quot;</span>,</div>
<div class="ln" style="top:424px">                url: <span class="s">&quot;functions.php&quot;</span>,</div>
<div class="ln" style="top:440px">                dataType: <span class="s">&quot;json&quot;</span>,</div>
<div class="ln" style="top:456px">                data: {</div>
<div class="ln" style="top:472px">                    <span class="s">'action'</span>: <span class="s">'oneRoll'</span></div>
<div class="ln" style="top:488px">                },</div>
<div class="ln" style="top:504px">                success: <span class="k">function</span>(<span class="d">data</span>,<span class="d">status</span>) {</div>
<div class="ln" style="top:520px">                    <span class="k">if</span> (<span class="d">data</span>.length <span class="o">&gt;</span> <span class="n">0</span>) {</div>
<div class="ln" style="top:536px">                      console.log(<span class="d">data</span>);</div>
<div class="ln" style="top:552px">                        $(<span class="s">'#roll1'</span>).html(<span class="s">&quot;&lt;div&gt;&quot;</span> <span class="o">+</span> <span class="d">data</span>[<span class="n">0</span>].itemName <span class="o">+</span> <span class="s">&quot; &quot;</span> <span class="o">+</span> <span class="d">data</span>[<span class="n">0</span>].rarity <span class="o">+</span><span class="s">'&lt;/div&gt;'</span>);</div>
<div class="ln" style="top:568px">                    }</div>
<div class="ln" style="top:584px">                  },</div>
<div class="ln" style="top:600px">                complete: <span class="k">function</span>(<span class="d">data</span>,<span class="d">status</span>) {</div>
<div class="ln" style="top:616px">                     <span class="c">//yo;</span></div>
<div class="ln" style="top:632px">                }</div>
<div class="ln" style="top:648px">            });</div>
<div class="ln" style="top:664px">      }</div>
<div class="ln" style="top:680px">      <span class="k">function</span> <span class="d">tenRoll</span>() {</div>
<div class="ln" style="top:696px">        $.ajax({</div>
<div class="ln" style="top:712px">                type: <span class="s">&quot;get&quot;</span>,</div>
<div class="ln" style="top:728px">                url: <span class="s">&quot;functions.php&quot;</span>,</div>
<div class="ln" style="top:744px">                dataType: <span class="s">&quot;json&quot;</span>,</div>
</div>
<div style="position:absolute;left:524px;top:232px;width:1px;height:16px;background:#b8aef8"></div>
<div id="bparrow" style="position:absolute;left:525px;top:232px;width:0;height:0;border-top:8px solid transparent;border-bottom:8px solid transparent;border-left:4px solid #b8aef8"></div>
<svg width="1670" height="790" viewBox="0 0 1670 790" style="position:absolute;left:0;top:0;pointer-events:none">
<path d="M1141 124.3 L1484 54.8" stroke="#f20ddc" stroke-width="3.1" fill="none" stroke-linecap="round"/>
<path d="M1491.2 53.2 L1479.4 62.2 L1483.2 55.2 L1476 48.9 Z" fill="#f20ddc"/>
</svg>
</body>
</html>
